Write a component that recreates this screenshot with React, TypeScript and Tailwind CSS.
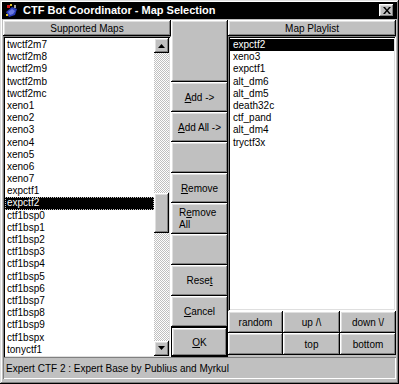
import React from "react";

const raised =
  "bg-[#c0c0c0] shadow-[inset_-1px_-1px_#000,inset_1px_1px_#fff,inset_-2px_-2px_#808080,inset_2px_2px_#dfdfdf]";
const sunken =
  "shadow-[inset_1px_1px_#808080,inset_-1px_-1px_#fff,inset_2px_2px_#000,inset_-2px_-2px_#dfdfdf]";

const leftMaps = [
  "twctf2m7", "twctf2m8", "twctf2m9", "twctf2mb", "twctf2mc",
  "xeno1", "xeno2", "xeno3", "xeno4", "xeno5", "xeno6", "xeno7",
  "expctf1", "expctf2",
  "ctf1bsp0", "ctf1bsp1", "ctf1bsp2", "ctf1bsp3", "ctf1bsp4", "ctf1bsp5",
  "ctf1bsp6", "ctf1bsp7", "ctf1bsp8", "ctf1bsp9", "ctf1bspx", "tonyctf1",
];
const rightMaps = [
  "expctf2", "xeno3", "expctf1", "alt_dm6", "alt_dm5", "death32c", "ctf_pand", "alt_dm4", "tryctf3x",
];

function Btn({ h, children, extra = "" }: { h: string; children?: React.ReactNode; extra?: string }) {
  return (
    <div className={`${raised} ${h} flex items-center justify-center text-[10px] text-black ${extra}`}>
      {children}
    </div>
  );
}

function Arrow({ up }: { up: boolean }) {
  return (
    <div className={`${raised} w-[15px] h-[15px] flex items-center justify-center shrink-0`}>
      <svg width="7" height="4" viewBox="0 0 7 4">
        {up ? <polygon points="3.5,0 7,4 0,4" fill="#000" /> : <polygon points="0,0 7,0 3.5,4" fill="#000" />}
      </svg>
    </div>
  );
}

export default function App() {
  return (
    <div className="w-[399px] h-[384px] bg-[#c0c0c0] font-['Liberation_Sans',Arial,sans-serif] shadow-[inset_-1px_-1px_#000,inset_1px_1px_#dfdfdf,inset_-2px_-2px_#808080,inset_2px_2px_#fff] pt-[2px] pl-[2px] pr-[2px] flex flex-col select-none">
      {/* Title bar */}
      <div className="h-[17px] bg-black flex items-center shrink-0">
        <svg width="16" height="16" viewBox="0 0 16 16" className="ml-[2px] shrink-0">
          <polygon points="2,9 8,4 13,6 11,12 5,14" fill="#2a3cb8" />
          <polygon points="4,9 8,6 11,8 9,11 6,12" fill="#6b7be0" />
          <rect x="3" y="2" width="3" height="3" fill="#d01818" />
          <rect x="6" y="1" width="2" height="2" fill="#e0c020" />
          <rect x="10" y="2" width="2" height="3" fill="#a0a0a0" />
          <rect x="2" y="11" width="2" height="2" fill="#e0c020" />
        </svg>
        <span className="ml-[3px] text-white font-bold text-[11px] leading-none whitespace-nowrap">
          CTF Bot Coordinator - Map Selection
        </span>
        <div className="flex-1" />
        <div className={`${raised} w-[15px] h-[13px] mr-[3px] flex items-center justify-center`}>
          <svg width="8" height="7" viewBox="0 0 8 7">
            <path d="M0,0 L2,0 L4,2.5 L6,0 L8,0 L5,3.5 L8,7 L6,7 L4,4.5 L2,7 L0,7 L3,3.5 Z" fill="#000" />
          </svg>
        </div>
      </div>

      {/* Content */}
      <div className="flex mt-[1px] ml-[1px] h-[337px] shrink-0">
        {/* Left panel */}
        <div className="w-[168px] flex flex-col">
          <div className={`${raised} h-[16px] flex items-center justify-center text-[10px] text-black shrink-0`}>
            Supported Maps
          </div>
          <div className={`flex-1 bg-white ${sunken} p-[2px] flex`}>
            <div className="flex-1 pt-[1px] overflow-hidden">
              {leftMaps.map((m, i) => (
                <div
                  key={i}
                  className={`h-[12.2px] leading-[12.2px] text-[10px] pl-[2px] whitespace-nowrap ${
                    m === "expctf2"
                      ? "bg-black text-white outline-1 outline-dotted outline-[#c0c0c0] -outline-offset-1"
                      : "text-black"
                  }`}
                >
                  {m}
                </div>
              ))}
            </div>
            <div className="w-[15px] flex flex-col">
              <Arrow up />
              <div className="flex-1 bg-[repeating-conic-gradient(#c0c0c0_0_25%,#ffffff_0_50%)] bg-[length:2px_2px] flex flex-col">
                <div className={`${raised} h-[40px] mt-[140px]`} />
              </div>
              <Arrow up={false} />
            </div>
          </div>
        </div>

        {/* Middle buttons */}
        <div className="w-[57px] flex flex-col">
          <Btn h="h-[62px]" />
          <Btn h="h-[30px]">
            <span><span className="underline">A</span>dd -&gt;</span>
          </Btn>
          <Btn h="h-[30px]">
            <span><span className="underline">A</span>dd All -&gt;</span>
          </Btn>
          <Btn h="h-[31px]" />
          <Btn h="h-[30px]">
            <span><span className="underline">R</span>emove</span>
          </Btn>
          <Btn h="h-[31px]" extra="!justify-start pl-[8px]">
            <span className="leading-[12px]">
              R<span className="underline">e</span>move
              <br />
              All
            </span>
          </Btn>
          <Btn h="h-[31px]" />
          <Btn h="h-[31px]">
            <span>Rese<span className="underline">t</span></span>
          </Btn>
          <Btn h="h-[31px]">
            <span><span className="underline">C</span>ancel</span>
          </Btn>
          <div className="h-[30px] border border-black">
            <Btn h="h-full">
              <span><span className="underline">O</span>K</span>
            </Btn>
          </div>
        </div>

        {/* Right panel */}
        <div className="w-[168px] flex flex-col">
          <div className={`${raised} h-[16px] flex items-center justify-center text-[10px] text-black shrink-0`}>
            Map Playlist
          </div>
          <div className={`h-[275px] bg-white ${sunken} p-[2px] shrink-0`}>
            <div className="pt-[1px]">
              {rightMaps.map((m, i) => (
                <div
                  key={i}
                  className={`h-[12.2px] leading-[12.2px] text-[10px] pl-[3px] whitespace-nowrap ${
                    i === 0 ? "bg-black text-white" : "text-black"
                  }`}
                >
                  {m}
                </div>
              ))}
            </div>
          </div>
          <div className="grid grid-cols-[55px_57px_56px] grid-rows-[22px_22px]">
            <Btn h="h-[22px]">random</Btn>
            <Btn h="h-[22px]">up /\</Btn>
            <Btn h="h-[22px]">down \/</Btn>
            <Btn h="h-[22px]" />
            <Btn h="h-[22px]">top</Btn>
            <Btn h="h-[22px]">bottom</Btn>
          </div>
        </div>
      </div>

      {/* Status bar */}
      <div className="ml-[1px] mr-[1px] h-[22px] shrink-0 shadow-[inset_1px_1px_#808080,inset_-1px_-1px_#fff] flex items-center pl-[3px] text-[10px] text-black whitespace-nowrap">
        Expert CTF 2 : Expert Base by Publius and Myrkul
      </div>
    </div>
  );
}
